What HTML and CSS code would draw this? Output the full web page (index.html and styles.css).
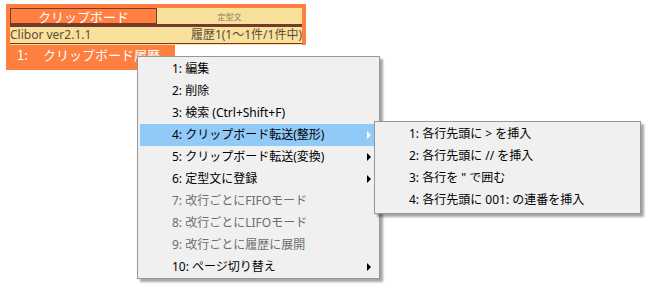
FILE: index.html
```html
<!DOCTYPE html>
<html lang="ja">
<head>
<meta charset="utf-8">
<link rel="stylesheet" href="styles.css">
</head>
<body>
<div class="win">
  <div class="tabs">
    <div class="tab active">クリップボード</div>
    <div class="tab">定型文</div>
  </div>
  <div class="bar"></div>
  <div class="status"><span>Clibor ver2.1.1</span><span>履歴1(1～1件/1件中)</span></div>
</div>
<div class="row"><span class="num">1:</span>クリップボード履歴</div>

<div class="menu main">
  <div class="item">1: 編集</div>
  <div class="item">2: 削除</div>
  <div class="item">3: 検索 (Ctrl+Shift+F)</div>
  <div class="item sel has-sub">4: クリップボード転送(整形)</div>
  <div class="item has-sub">5: クリップボード転送(変換)</div>
  <div class="item has-sub">6: 定型文に登録</div>
  <div class="item dis">7: 改行ごとにFIFOモード</div>
  <div class="item dis">8: 改行ごとにLIFOモード</div>
  <div class="item dis">9: 改行ごとに履歴に展開</div>
  <div class="item has-sub">10: ページ切り替え</div>
</div>

<div class="menu sub">
  <div class="item">1: 各行先頭に &gt; を挿入</div>
  <div class="item">2: 各行先頭に // を挿入</div>
  <div class="item">3: 各行を " で囲む</div>
  <div class="item">4: 各行先頭に 001: の連番を挿入</div>
</div>
</body>
</html>
```

FILE: styles.css
```css
html, body {
  margin: 0;
  padding: 0;
  background: #ffffff;
  width: 647px;
  height: 290px;
  overflow: hidden;
  font-family: "Noto Sans CJK JP", "Noto Sans", sans-serif;
}

.win {
  margin: 4px 0 0 6px;
  width: 300px;
  box-sizing: border-box;
  background: #fe7f40;
  padding: 4px 4px 0 4px;
}

.tabs {
  display: flex;
  height: 16px;
}

.tab {
  box-sizing: border-box;
  height: 16px;
  display: flex;
  align-items: center;
  justify-content: center;
}

.tab.active {
  width: 147px;
  border: 1px solid #7a3a26;
  background: #fe7f40;
  color: #ffffff;
  font-size: 13px;
}

.tab:not(.active) {
  flex: 1;
  background: #f8e29b;
  color: #8a7a60;
  font-size: 8px;
}

.bar {
  height: 3px;
  background: #733a2c;
}

.status {
  height: 18px;
  box-sizing: border-box;
  padding-bottom: 2px;
  display: flex;
  justify-content: space-between;
  align-items: center;
  font-family: "Noto Sans", "Noto Sans CJK JP", sans-serif;
  font-size: 12px;
  line-height: 16px;
  color: #5e4a3e;
  background: linear-gradient(to bottom, #f8e29b 0, #f8e29b 16px, #733a2c 16px, #733a2c 17px, #f8e29b 17px);
}

.row {
  margin-left: 6px;
  width: 169px;
  height: 25px;
  box-sizing: border-box;
  background: #fe7f40;
  color: #ffffff;
  font-size: 13px;
  line-height: 20px;
  padding-left: 11px;
  display: flex;
}

.row .num {
  width: 26px;
}

.menu {
  position: absolute;
  box-sizing: border-box;
  background: #f0f0f0;
  border: 1px solid #979797;
  padding: 1px 2px;
  box-shadow: 3px 3px 2px rgba(0, 0, 0, 0.35);
  font-family: "Noto Sans", "Noto Sans CJK JP", sans-serif;
  font-size: 12px;
  color: #000000;
}

.main {
  left: 137px;
  top: 56px;
  width: 243px;
  height: 223px;
}

.sub {
  left: 374px;
  top: 121px;
  width: 267px;
  height: 93px;
}

.item {
  position: relative;
  height: 22px;
  line-height: 22px;
  padding-left: 32px;
  white-space: nowrap;
}

.item.sel {
  background: #91c9f7;
}

.item.dis {
  color: #6d6d6d;
}

.has-sub::after {
  content: "";
  position: absolute;
  right: 6px;
  top: 7px;
  width: 0;
  height: 0;
  border-top: 4px solid transparent;
  border-bottom: 4px solid transparent;
  border-left: 4px solid #000000;
}

.sel.has-sub::after {
  border-left-color: #ffffff;
}
```
